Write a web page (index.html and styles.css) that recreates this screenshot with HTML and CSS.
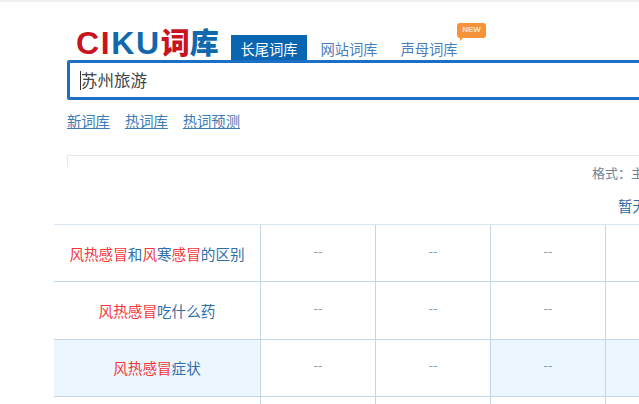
FILE: index.html
```html
<!DOCTYPE html>
<html lang="zh">
<head>
<meta charset="utf-8">
<title>词库</title>
<link rel="stylesheet" href="styles.css">
</head>
<body>
<div class="page">
  <header class="top">
    <div class="logo"><span class="red">CI</span><span class="blue">KU</span><span class="logo-cn red">词</span><span class="logo-cn blue">库</span></div>
    <nav class="tabs">
      <a class="tab active">长尾词库</a>
      <a class="tab">网站词库</a>
      <a class="tab has-badge">声母词库<span class="badge">NEW</span></a>
    </nav>
  </header>
  <div class="search"><span class="caret"></span>苏州旅游</div>
  <div class="links"><a>新词库</a><a>热词库</a><a>热词预测</a></div>
  <div class="panel"></div>
  <div class="format">格式：主</div>
  <div class="empty">暂无</div>
  <div class="grid">
    <div class="cell name"><span><em>风热感冒</em>和<em>风</em>寒<em>感冒</em>的区别</span></div>
    <div class="cell dash">--</div><div class="cell dash">--</div><div class="cell dash">--</div><div class="cell"></div>
    <div class="cell name"><span><em>风热感冒</em>吃什么药</span></div>
    <div class="cell dash">--</div><div class="cell dash">--</div><div class="cell dash">--</div><div class="cell"></div>
    <div class="cell name hl"><span><em>风热感冒</em>症状</span></div>
    <div class="cell dash">--</div><div class="cell dash">--</div><div class="cell dash hl">--</div><div class="cell hl"></div>
    <div class="cell"></div>
    <div class="cell"></div><div class="cell"></div><div class="cell"></div><div class="cell"></div>
  </div>
</div>
</body>
</html>
```
FILE: styles.css
```css
html, body {
  margin: 0;
  height: 100%;
  overflow: hidden;
  background: #fff;
}
.page {
  width: 760px;
  height: 404px;
  overflow: hidden;
  border-top: 2px solid #eeeeee;
  box-sizing: border-box;
  font-family: "Noto Sans CJK SC", "Liberation Sans", sans-serif;
  font-size: 14px;
  color: #333;
}
.top {
  display: flex;
  align-items: flex-end;
  height: 58px;
  margin-left: 76px;
}
.logo {
  width: 155px;
  height: 33px;
  font-family: "Liberation Sans", "Noto Sans CJK SC", sans-serif;
  font-size: 32px;
  line-height: 29px;
  font-weight: 700;
  white-space: nowrap;
  letter-spacing: 1.6px;
}
.logo-cn {
  font-family: "Noto Sans CJK SC", sans-serif;
  font-size: 29px;
  font-weight: 900;
  letter-spacing: 0;
}
.red { color: #c8141f; }
.blue { color: #1168ad; }
.tabs {
  display: flex;
  align-items: stretch;
  height: 25px;
}
.tab {
  position: relative;
  width: 72px;
  margin-right: 8px;
  text-align: center;
  line-height: 28px;
  color: #4a7fbd;
  font-size: 14.3px;
  white-space: nowrap;
}
.tab.active {
  width: 76px;
  background: #0b66b2;
  color: #fff;
  margin-right: 6px;
}
.badge {
  position: absolute;
  left: 64px;
  top: -12px;
  width: 29px;
  height: 15px;
  border-radius: 3px;
  background: #f5923a;
  color: #fde3c8;
  font: 700 8px/14px "Liberation Sans", sans-serif;
  text-align: center;
}
.badge::after {
  content: "";
  position: absolute;
  left: 3px;
  top: 14px;
  border-top: 4px solid #f5923a;
  border-right: 4px solid transparent;
}
.search {
  display: flex;
  align-items: center;
  margin-left: 67px;
  height: 40px;
  box-sizing: border-box;
  border: 3px solid #1c6fc4;
  border-radius: 2px;
  padding-left: 10px;
  font-size: 16.5px;
  color: #444;
}
.caret {
  width: 1px;
  height: 19px;
  background: #333;
}
.links {
  display: flex;
  gap: 15px;
  margin: 11px 0 0 67px;
  height: 20px;
  line-height: 20px;
  font-size: 14.3px;
}
.links a {
  color: #3f7cb4;
  text-decoration: underline;
}
.panel {
  margin: 24px 0 0 67px;
  height: 11px;
  border-top: 1px solid #e3e9ee;
  border-left: 1px solid #e3e9ee;
}
.format {
  margin: -4px 0 0 592px;
  height: 20px;
  line-height: 20px;
  font-size: 13px;
  color: #6d8597;
  white-space: nowrap;
}
.empty {
  margin: 12px 0 0 618px;
  height: 29px;
  line-height: 22px;
  font-size: 14.3px;
  color: #2d6ca8;
  white-space: nowrap;
}
.grid {
  display: grid;
  grid-template-columns: 207px 115px 115px 115px 154px;
  grid-auto-rows: 57.4px;
  margin-left: 54px;
  border-top: 1px solid #d8e6ef;
}
.cell {
  display: flex;
  align-items: center;
  justify-content: center;
  box-sizing: border-box;
  border-right: 1px solid #c6d6e2;
  border-bottom: 1px solid #c6d6e2;
  font-size: 13px;
  color: #6f8fa8;
}
.dash {
  padding-bottom: 6px;
  color: #7f9db4;
}
.name {
  font-size: 14.6px;
  color: #2f6fa8;
}
.name em {
  font-style: normal;
  color: #f2363c;
}
.hl { background: #ebf6fe; }
```
